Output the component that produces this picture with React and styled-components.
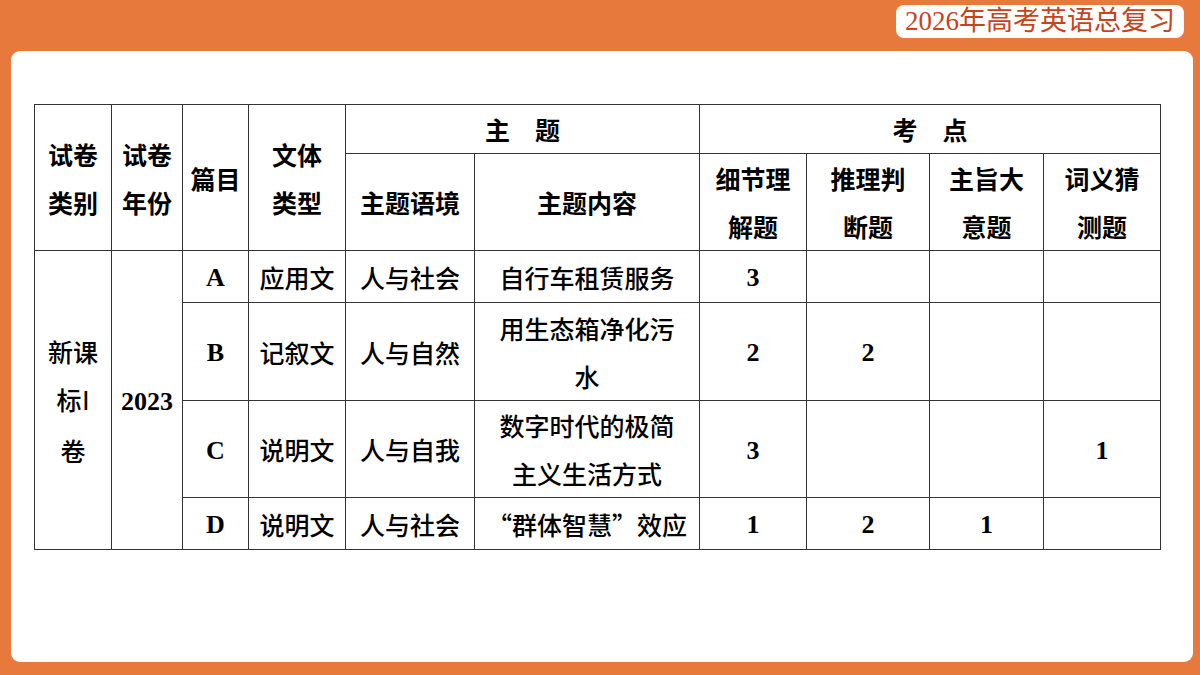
import React from "react";
import styled, { createGlobalStyle } from "styled-components";

const G = createGlobalStyle`
  html,body{margin:0;padding:0;background:#e8793d;}
  body{width:1200px;height:675px;overflow:hidden;}
`;
const Page = styled.div`
  width:1200px;height:675px;box-sizing:border-box;padding:5px 7px 13px 11px;
  display:flex;flex-direction:column;background:#e8793d;
`;
const Top = styled.div`display:flex;justify-content:flex-end;height:46px;padding-right:9px;`;
const Pill = styled.div`
  width:288px;height:33px;background:#fff;border-radius:8px;
  color:#c9421a;font:27px "Liberation Serif","Noto Sans CJK SC",serif;
  display:flex;align-items:center;justify-content:center;line-height:1;
`;
const Panel = styled.div`
  flex:1;background:#fff;border-radius:9px;padding:53px 0 0 23px;
`;
const Table = styled.table`
  border-collapse:collapse;table-layout:fixed;width:1127px;
  font-family:"Noto Sans CJK SC",sans-serif;font-size:25px;color:#000;
  td{border:1.5px solid #333;text-align:center;vertical-align:middle;padding:0;line-height:48px;font-weight:500;}
`;
const Head = styled.td`font-weight:700 !important;`;
const Cell = styled.td`font-weight:500;`;
const L = styled.span`font-family:"Liberation Serif",serif;font-weight:700;font-size:26px;`;
const Two = styled.div`line-height:48px;`;

const widths=[77,71,66,97,129,225,107,123,114,117];
const rows=[
  ["A","应用文","人与社会","自行车租赁服务","3","","","",49],
  ["B","记叙文","人与自然",<Two>用生态箱净化污<br/>水</Two>,"2","2","","",98],
  ["C","说明文","人与自我",<Two>数字时代的极简<br/>主义生活方式</Two>,"3","","","1",97],
  ["D","说明文","人与社会","“群体智慧”效应","1","2","1","",49],
];
export default function App(){
  return <Page><G/>
    <Top><Pill>2026年高考英语总复习</Pill></Top>
    <Panel>
      <Table>
        <colgroup>{widths.map((w,i)=><col key={i} style={{width:w}}/>)}</colgroup>
        <tbody>
          <tr style={{height:49}}>
            <Head rowSpan={2}><Two>试卷<br/>类别</Two></Head>
            <Head rowSpan={2}><Two>试卷<br/>年份</Two></Head>
            <Head rowSpan={2}>篇目</Head>
            <Head rowSpan={2}><Two>文体<br/>类型</Two></Head>
            <Head colSpan={2}>主&emsp;题</Head>
            <Head colSpan={4}>考&emsp;点</Head>
          </tr>
          <tr style={{height:97}}>
            <Head>主题语境</Head><Head>主题内容</Head>
            <Head><Two>细节理<br/>解题</Two></Head>
            <Head><Two>推理判<br/>断题</Two></Head>
            <Head><Two>主旨大<br/>意题</Two></Head>
            <Head><Two>词义猜<br/>测题</Two></Head>
          </tr>
          {rows.map((r,i)=>(
            <tr key={i} style={{height:r[8]}}>
              {i===0&&<><Cell rowSpan={4}><Two>新课<br/>标<L style={{fontWeight:400}}>Ⅰ</L><br/>卷</Two></Cell>
              <Cell rowSpan={4}><L>2023</L></Cell></>}
              <Cell><L>{r[0]}</L></Cell>
              <Cell>{r[1]}</Cell><Cell>{r[2]}</Cell>
              <Cell style={{lineHeight:typeof r[3]==="string"?"48px":undefined}}>{r[3]}</Cell>
              {[4,5,6,7].map(k=><Cell key={k}><L>{r[k]}</L></Cell>)}
            </tr>
          ))}
        </tbody>
      </Table>
    </Panel>
  </Page>;
}
